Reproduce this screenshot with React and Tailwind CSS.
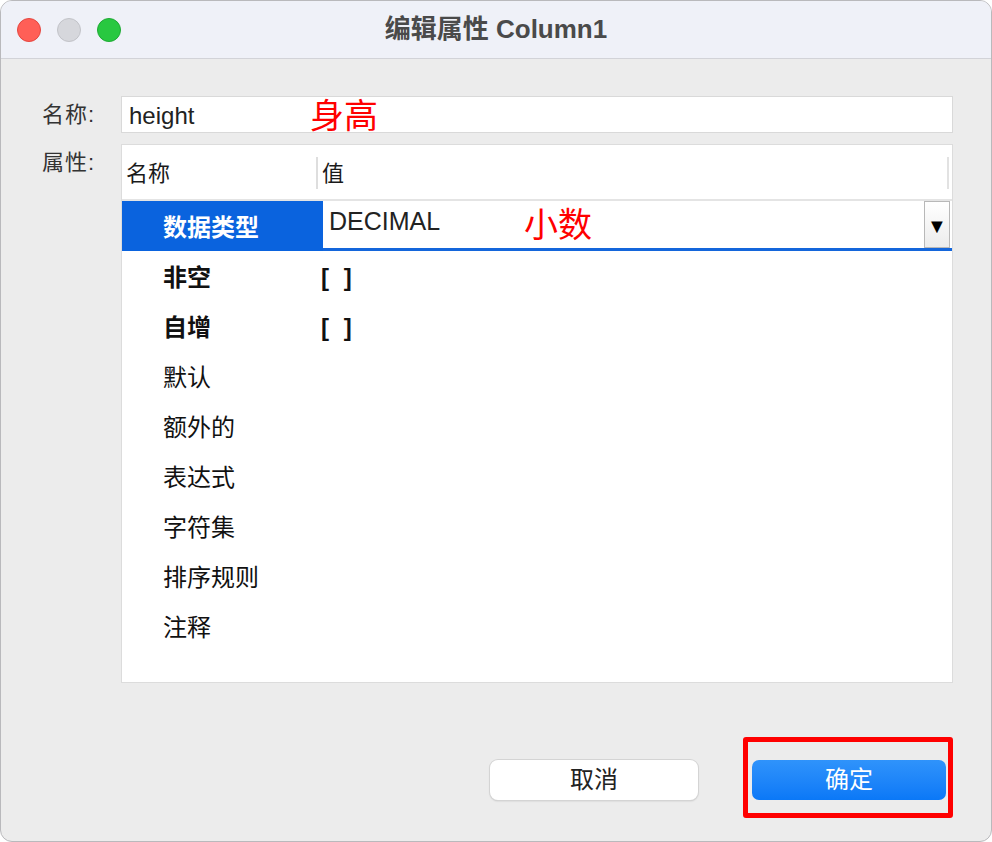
import React from "react";

const FONT = "font-['Liberation_Sans','Noto_Sans_CJK_SC',sans-serif]";

const rows = [
  { name: "非空", value: "[ ]", bold: true },
  { name: "自增", value: "[ ]", bold: true },
  { name: "默认" },
  { name: "额外的" },
  { name: "表达式" },
  { name: "字符集" },
  { name: "排序规则" },
  { name: "注释" },
];

const TitleBar = () => (
  <div className="relative flex h-[58px] items-center border-b border-[#d2d3d8] bg-[#eff1f8] pl-4">
    <div className="flex gap-4">
      <span className="h-6 w-6 rounded-full border border-[#e5463f] bg-[#ff5f57]" />
      <span className="h-6 w-6 rounded-full border border-[#c2c3c8] bg-[#d6d7dc]" />
      <span className="h-6 w-6 rounded-full border border-[#1eaa34] bg-[#28c840]" />
    </div>
    <div className="absolute inset-0 flex items-center justify-center text-[26px] font-bold text-[#4a4a4a]">
      编辑属性 Column1
    </div>
  </div>
);

const App = () => {
  return (
    <div className={`${FONT} h-[842px] w-[992px] overflow-hidden bg-white`}>
      <div className="flex h-full flex-col overflow-hidden rounded-[12px] border border-[#b9b9bc] bg-[#ececec]">
        <TitleBar />

        <div className="flex flex-1 flex-col pr-[38px]">
          {/* name field */}
          <div className="mt-[37px] flex items-center">
            <div className="w-[120px] pl-[41px] text-[22px] tracking-[1px] text-[#333]">名称:</div>
            <div className="flex h-[37px] flex-1 items-center border border-[#d9d9d9] bg-white pl-[7px] pt-[3px]">
              <span className="w-[181px] text-[24px] text-[#222]">height</span>
              <span className="text-[34px] leading-none text-[#ff0000]">身高</span>
            </div>
          </div>

          {/* property table */}
          <div className="mt-[11px] flex">
            <div className="w-[120px] pl-[41px] pt-[2px] text-[22px] tracking-[1px] text-[#333]">属性:</div>
            <div className="flex h-[539px] flex-1 flex-col border border-[#dcdcdc] bg-white">
              <div className="flex h-[56px] items-center border-b-2 border-[#e4e4e4] pt-[2px]">
                <div className="w-[194px] pl-[4px] text-[22px] text-[#1a1a1a]">名称</div>
                <div className="h-[32px] w-[2px] bg-[#dedede]" />
                <div className="flex-1 pl-[4px] text-[22px] text-[#1a1a1a]">值</div>
                <div className="mr-[3px] h-[32px] w-[2px] bg-[#e2e2e2]" />
              </div>

              {/* selected row with editor */}
              <div className="flex h-[50px]">
                <div className="flex w-[201px] items-center bg-[#0a63de] pl-[41px] pt-[3px] text-[24px] font-bold text-white">
                  数据类型
                </div>
                <div className="flex flex-1 items-stretch border-b-[3px] border-[#1466db] bg-white">
                  <div className="flex flex-1 items-start pl-[6px] pt-[2px]">
                    <span className="w-[195px] text-[25px] text-[#222]">DECIMAL</span>
                    <span className="pt-[2px] text-[34px] leading-[40px] text-[#ff0000]">小数</span>
                  </div>
                  <div className="mr-[2px] flex w-[26px] items-center justify-center border border-[#b8b8b8] bg-gradient-to-b from-white to-[#ececec] pt-[2px] text-[20px] leading-none text-black">
                    ▼
                  </div>
                </div>
              </div>

              {rows.map((r) => (
                <div key={r.name} className="flex h-[50px] items-center pt-[4px]">
                  <div
                    className={`w-[199px] pl-[41px] text-[24px] text-[#111] ${
                      r.bold ? "font-bold" : ""
                    }`}
                  >
                    {r.name}
                  </div>
                  {r.value && (
                    <div className="text-[24px] font-bold tracking-[4px] text-[#111]">{r.value}</div>
                  )}
                </div>
              ))}
            </div>
          </div>

          {/* buttons */}
          <div className="mt-[54px] flex items-start justify-end">
            <button className="mt-[23px] h-[40px] w-[208px] rounded-[8px] bg-white text-[24px] text-[#222] shadow-[0_0_0_1px_#d4d4d4,0_1px_2px_rgba(0,0,0,0.2)]">
              取消
            </button>
            <div className="ml-[45px] rounded-[3px] border-[5px] border-[#ff0000] pb-[13px] pl-[4px] pr-[2px] pt-[18px]">
              <button className="h-[40px] w-[194px] rounded-[7px] bg-gradient-to-b from-[#2f93fb] to-[#0a78f7] text-[24px] text-white">
                确定
              </button>
            </div>
          </div>
        </div>
      </div>
    </div>
  );
};

export default App;
